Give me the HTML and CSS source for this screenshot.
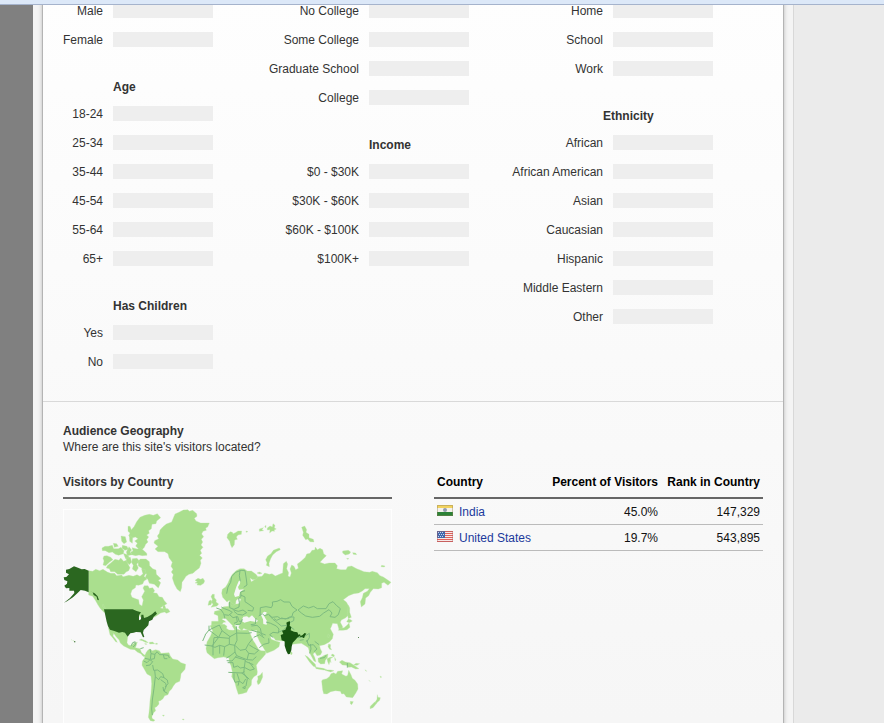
FILE: index.html
```
<!DOCTYPE html>
<html lang="en">
<head>
<meta charset="utf-8">
<title>Audience</title>
<link rel="stylesheet" href="styles.css">
</head>
<body>
<div class="topbar"></div>
<div class="shell">
<div class="gutter"></div>
<div class="sheet">
<main class="panel">
  <section class="demographics">
    <div class="column">
      <dl class="rows">
        <div><dt>Male</dt><dd></dd></div>
        <div><dt>Female</dt><dd></dd></div>
      </dl>
      <h3>Age</h3>
      <dl class="rows">
        <div><dt>18-24</dt><dd></dd></div>
        <div><dt>25-34</dt><dd></dd></div>
        <div><dt>35-44</dt><dd></dd></div>
        <div><dt>45-54</dt><dd></dd></div>
        <div><dt>55-64</dt><dd></dd></div>
        <div><dt>65+</dt><dd></dd></div>
      </dl>
      <h3>Has Children</h3>
      <dl class="rows">
        <div><dt>Yes</dt><dd></dd></div>
        <div><dt>No</dt><dd></dd></div>
      </dl>
    </div>
    <div class="column">
      <dl class="rows">
        <div><dt>No College</dt><dd></dd></div>
        <div><dt>Some College</dt><dd></dd></div>
        <div><dt>Graduate School</dt><dd></dd></div>
        <div><dt>College</dt><dd></dd></div>
      </dl>
      <h3>Income</h3>
      <dl class="rows">
        <div><dt>$0 - $30K</dt><dd></dd></div>
        <div><dt>$30K - $60K</dt><dd></dd></div>
        <div><dt>$60K - $100K</dt><dd></dd></div>
        <div><dt>$100K+</dt><dd></dd></div>
      </dl>
    </div>
    <div class="column">
      <dl class="rows">
        <div><dt>Home</dt><dd></dd></div>
        <div><dt>School</dt><dd></dd></div>
        <div><dt>Work</dt><dd></dd></div>
      </dl>
      <h3 class="wide">Ethnicity</h3>
      <dl class="rows">
        <div><dt>African</dt><dd></dd></div>
        <div><dt>African American</dt><dd></dd></div>
        <div><dt>Asian</dt><dd></dd></div>
        <div><dt>Caucasian</dt><dd></dd></div>
        <div><dt>Hispanic</dt><dd></dd></div>
        <div><dt>Middle Eastern</dt><dd></dd></div>
        <div><dt>Other</dt><dd></dd></div>
      </dl>
    </div>
  </section>

  <section class="geography">
    <h2>Audience Geography</h2>
    <p>Where are this site's visitors located?</p>
    <div class="split">
      <div>
        <h3 class="ruled">Visitors by Country</h3>
        <svg class="map" viewBox="9 27 987 690" role="img" aria-label="World map">
          <rect class="frame" x="10" y="28" width="985" height="700"/>
          <g class="land">
            <path d="M345 42l12-5 13-7 14-1 4 5 10-3 12 10 1 8-8 6 5 8 14 6 17 0 9 0-5 12-6 3 2 7-10 3-4 8 6 8-7 8 4 8-5 9 6 7-8 9 4 9-6 6 8 8-6 7 2 9-5 14-11 8-8 8-12 3-9 6-5 8-7 10-1 16-4 12-10-8-8-15-6-18 3-10-6-8 5-8-6-9 4-12-10-14-3-12-10-6-20 0-9-8 9-8-12-10 2-7 12-6-4-8 6-8 2-10 9-10 10-8 16-6z"/>
            <path d="M222 80l8-15 10-13 14-6 14-3 12 3 12-5 10 12-12 10-2 8-12 2-2 13-8 6 2 8-8 5 6 6-6 8 4 7-7 7-4 9-7 7-10-2-9-9 5-8-8-7 10-7-8-5-12 4-8-8 4-8-6-5 0-15 6 0 4 10z"/>
            <path d="M216 143l16 4 9-4 11 9 8 8 1 6-14 1-10-2-10 2-12-3-3-8 7-3zM208 106l10 7-1 17-8-6zM183 108l13 2 4 16-8 5-7-7zM145 139l12-3 4 10 14 0 8-4 9 10-2 9-14 5-10-3-9-7-10 2-11-6-9 0-1-8 9-5zM160 130l10 1 5 8-12 3zM187 136l14 3 4 9-10 3-9-6zM207 140l8 10-5 6 6 8-14 3-3-11zM190 160l14 5 4 9-11 2zM132 168l9-1 11 5 7 7-10 7-12 11-8-2 3-12-3-8zM153 188l12-10 12 3 5-7 9 10 8-3 7 15 4 7-4 9-8 4-6 7-19 0-9-8-12 0-4-9-9-2 3-7zM198 172l13 0 4 14-7 8-8-8zM217 176l14-1 8 9-9 8 5 12-7 11-11-8 3-11-5-8zM241 177l17 0 10 8 1 12 9 9 10 4 1 13 14 13-8 5 7 7-7 16-12-11-15-3-5-13-8-3 5-12-11-4-4-14-10-6-1-14zM221 229l12-2 10 13-7 10-8-4-9 2z"/>
            <path d="M86 212l12 2 9-6 12 4 10-4 13 8 10 4 12 0 6 7 15-2 4 5 18-4 13 3 11-5 9 5 9-8-4-13 10 0 3 12-6 9 9 8-9 6-4 9-12 4-8-1-2 8-10 7-4 12 4 10 11 4 9 3 2 14 8 5 4-18-5-10 9-16-5-10 4-7 11 0 4 8 10-2 6 9-4 6 11 2 6 10 10 2 6 10 8 9-13 8-7 5 11 2 12 0 6 9-10 5-7-4-11 3-13 9-14 7-22 6-14-12-14-12H132l-10-10-8-12-8-14-8-12-12-4zM308 316l6 0 4 10 7 5-2 3-13-3zM129 312l8 15-10-8z"/>
            <path d="M145 383l13 5 14 4 18 1 10 8 3 10-2 17 4 7 8 2 9-7 10-4-3 10-3 7 14 3 4 11 9 8 8-3 4 5-5 4-11-2-6-8-10-4-9-8-13-1-20-10-10-9-4-10-8-8-8-11-2 8 8 10 5 9-5-2-9-12-8-9zM238 420l6-3 13 5 8 6-9-1-9-5zM268 427l10-1 6 5-15 1zM254 431l5 0 2 2-6 0zM287 430h5v3h-5z"/>
            <path d="M258 458l6-8 6-3 7 5 10-3 11 3 5 8 10-1 14-1 4 10 7 9 15 3 10 8 14 5-2 15-12 13-1 10-3 13-12 5-7 9-5 9-7 7-4 10-10 3-5 9-8 6-5 1 1 9-7 8-6 3 3 9-6 6-5 11 0 6 9 6-5 3-9-2-6-10 2-14 2-20 1-17 3-20 2-30-2-22-12-7-8-14-7-12 1-12 6-9z"/>
            <path d="M405 241l9-6 8 3 7-3 5 8-3 7-9 6-11-1 2-5-8-1 7-4zM307 646l6-1-2 4zM366 658l6-1v3zM34 419l3 2zM39 421l3 2z"/>
          </g>
          <g class="usa">
            <path d="M86 212l-12-5-9 1-11-5-12-4-14 8-10 2 0 9 9 5-8 8-8 1 2 8 9 4-1 7-8 6 5 8 10-1 0 8 14 0 1 7-13 15-18 14 9-4 18-12 13-12 10-10 13 2 11 5z"/>
            <path d="M132 328H218l12 5 13 4-6 9 0 15 6-3 1-14 6 0 2 10 10-3 14-8 10-9 5 7-10 9-4 9-10 5-2 12-8 8-6 6-2 8 4 13-4 1-7-15-14-1-7 2-10 2-8 10-8-12-8-2-10 2-14-5-13-4-6-10-4-14z"/>
            <path d="M89 273l9 4 3 8 9 5 2 9 5 2-4-12-9-9zM42 424h4v3h-4z"/>
          </g>
          <g transform="translate(390 0)">
            <g class="land">
              <path d="M98 292l-3-12 2-12 10-7 7-12 5-12 8-14 11-11 12-6 12 0 10 7 12 0 14 10 6 8-6 7-10 1-8-5 4 11 12-7 8-8 12-1 8-10 14 4 8-2 10 7 14-6 8-3 2-28 9-7 4 8-3 14 6 12-2 10 6 3 4-12-4-12 5-12 7 4 5 10 8-4-3-13 11-8 13-12 4-10 10-2 6-9 8-1 2-9 6 8 8-4 8 4 3 12 8 6-10 10-9 10 14 5 13-3 18 0 7 8-2 9 12 3 16 0 5-9 12-2 15 8 10 4 12 5 17 2 8-3 15 4 8 9 10 4 10 7 13 9-9 9-12-9-7 3 0 13-10 4-15-1-9 11-5 10-9 7-2 18-11 9-3-16 6-12 3-13 12-6 6-8-13 0-8 7-11 6-15 2-15 6-16 12 9 7 8 14 0 24-11 10-12 6-3 7 7 13-2 9-9-1-5-17-14-1-4 10-3 6 9 17-3 13-9 10-15 8-14 3 2 9 5 10-5 9-10 2-6-10-6 5 5 10 4 13-6-2-8-15-5-9-4-16-9-6-12-7-40 4-13-11-24-2-8-11-8 0 3 8 13 5 13 4-3 13-15 11-22 9-8-14-13-21-9-20 1-14-20 2-14-5-6-3-6 9-8-10-6-10-4-1 4 17-7-1-8-12-13-11-12 1-10 12-13 10-9-2-5-7 1-16 20 0-1-17-12-5 2-8 15-3 12-11 15-1 0-10 4-8 5 8 8 4 14-2 6-13-8-3-7 7-1 10-10 6-5-3-4-14-7 5z"/>
              <path d="M67 283l6 0 0 10 6 7-1 6 8 6-5 6-18 4 6-9-4-6 2-9-4-8zM57 303l6-3 3 6-3 8-9 2zM113 103l8-8 6 2 2 4 7-3 8-5 11 0-1 10-10 2-5 6 3 7-8 2-1 14-7 9-4-8-3-11-8-11zM208 87l12-4-4 6 5 3-13 2zM224 80l4-4 0 7zM232 84l8-6 7 3 2-10 6 5-2 8 6 3-7 3 2 4-8-1-7 6 1-10-8 1zM268 144l3 5-12 6-11 10-6 11-5 14 1 10-9-4 2-8-4-9 6-11 10-7 7-10zM335 82l9-4 6 11-2 8 9 6 0 10 13 5 2 8-12-1-7-8-6 2-9-13 2-9zM458 153l17-2 7 5-4 6-12 3-8-6zM488 158l9 1 3 5-10-1zM575 196l10 2-2 3-10-1zM470 175l7 1-5 2zM168 93l6 2-6 2zM201 219l7-3 8 4-8 2zM475 316l4 8 0 13 5 15-9 4-3-15z"/>
              <path d="M60 377l12-3 18-1 13 0 8 6-2 6 8 5 13 1 8-5 14 5 23-1 7 14 6 15 8 12 9 16 8 5 14 1 0 9-10 12-12 13-6 9 3 19-1 9-10 7-6 9-1 15-9 11-5 11-14 4-11 2-6-18-5-20-9-15 2-15-4-18-5-11-1-12-16-3-17 2-11 3-14-11-8-7-3-12 3-20 11-19 6-15z"/>
              <path d="M217 517l1 14-8 19-6 4-3-9 3-8-1-8 8-4zM301 452l6 7-3 6-3-4zM475 357l7 2 5 4-9 5-8-3zM477 369l3 13-9 7-12 2-14 0 3-5 14-3 9-7zM415 402l4 3-3 9-4-4zM416 432l6 2-1 9 4 6-6-1-5-8zM427 462l6 3-1 6-9-5zM384 475l10-4 9-5 11-4-2 11-6 8-2 10-12 1-7-6zM345 466l8 4 12 12 11 11 2 9-8-3-12-14zM376 501l12 2 12 2 10 4-9 1-23-4zM411 476l9-4 9-1-8 5 2 12-3-5-3 11-4-9zM434 472l4 8-3 2zM448 486l8-5 10 5 14 2 12 8 15 10-10 1-13-6-9 1-5-6-13-1zM498 490l11 1-8 5-10-1zM407 509l16 1 9 2-10 4-17-5zM526 509l4 5-3-1zM570 528l5 3-3 2zM536 541l5 3z"/>
              <path d="M395 543l3-4 12-3 8-6 5-9 8-3 7 4 5-8 15-2-3 10 13 7 5-3 3-15 7 13 4 11 8 6 8 11 1 15-7 13-9 13-10-1-9-1-7-10-7 1-4-8-15-2-14 3-11 7-10-1-3-11zM481 604l9 1-5 9-4-3zM562 584l2 8 7 1-2 8-10 9-4-3 6-9zM554 606l6 4-11 13-9 3 1-7z"/>
            </g>
            <g class="sea">
              <path d="M154 362l6-12 11-1 6 4 9-7 8 9 10 7-4 4-19-3-18 5zM212 343l11-8 7 2-2 7-7 1 5 10 5 8-1 11-10-2-1-14zM95 357l11-2 11 11 11 11-3 3-13-8-7-9zM133 377l6-2 10 1-5 7z"/>
              <path d="M139 260l7-16 5-4-1 11-6 10 3 8 15-1-12 9-3 11-12 3-3-8z"/>
            </g>
            <g class="borders">
              <path d="M110 281l4-20 8-14 3-17 12-13 16-6 12 1 4 25 2 18-10 7M150 211l-2 16 3 17M152 285l13 6 0 14 12 8 14 10-3 10-15-2M165 272l-13 4 1 14-7 5 2 13-1 13-15 7-13-5 0-17M79 324l14 5 8 12 4 15M94 321l9 5 14 5 10 6-11 9-13-2M128 329l17 5 14-4 11 8-12 7-15-2-11-9M119 344l10 9 14-3 5 15 9-3M139 349l3 17-10 4M157 357l-6 15-14 2M198 354l-2 18-14 2M210 347l1-24 17-3 16 3 4-8-1-9 14-2 11-5 10 7 17 0 7 13 15 11-12 8-3 11-12 7-22 0-9-6-17 2-10-9-13 4-6-6-11 7M324 330l16-12 16 6 15-5 11 7 26 0 9-15 12-6 10 11 12 10-6 18-10 8-15-2 6-11-9-10-16 10-12 10-22 3-20-4-13-9-10-9M237 345l12 13 13 10 12 10 17-2 8-8 12-6 1-11-13 0-12 6-12-3-15 7-8-5M228 366l14 4 17 8 8 9-2 12-16-2-10 7 11 9M265 397l15-7 10-9 12 0 11 8M184 378l17-2 10 9 3 15 13 5M184 390l14 5 12 2 8 10M191 412l18-8 14 10M208 443l13-10 16-4-1-14M310 406l14 7 17-2 17-11 0 13-8 13M341 419l-12 2M350 420l6 16 14-2 11 13-9 8M361 432l2 15-4 13M374 424l13 10M390 475l13-2 5-7M472 489l0 14"/>
              <path d="M57 377l0 13-12 15M46 405l-8 18M57 390l29 22-20 26-22-3M57 390l31-15M86 412l-14 1-3 27 0 26M88 375l8 17 24 18 20-11-1-20M96 392l-10 20 32 3 2-5M118 415l0 18-14 7-15-4-14 6-10-3M89 436l0 25M104 440l-3 27M140 399l32 1 13-2M140 399l1 22-7 15 1 20-15 12-11 6M118 433l17 3 15 15 17-3 9-17 12-15M167 448l9 12 17 2 13-11-15-8-13-8M176 460l-5 19 17 1 11-10M171 479l-31-12-5-11M140 467l-14 16-16-1M135 471l31 9-3 22-12 2-8-6-12 4-2-14-16 0M163 502l17 9 13-4-15-20M166 484l24 10M163 502l-2 17 11 17-4 22M115 517l41 2 8-4M132 520l0 17 3 10 14-3 10 7 8-14M141 520l7 21-4 16M155 519l14 10 9 9M158 563l8-4-1 7z"/>
            </g>
            <path class="india" d="M272 405l8-3-4-10 10-3 5-12-2-9 5-3 6-1 0 7-1 7 5 3-2 10 10 4 10 2 3 7 5-1 2 4-9 5-7 8-8 8-3 12-1 11-5 11-5 1-5-10-5-16 0-13-9-3z"/>
            <path class="india" d="M330 409l7-3 7-7 5 2-5 7-1 5-4 1-2-4-6 2z"/>
            <path class="usa" d="M504 412h3v2h-3z"/>
          </g>
          <g class="borders">
            <path d="M270 447l3 14 12 2 6-8 8 9 11 0 15 2 3 8M310 464l3 12 9 0M273 461l-2 17-10 10-10-5M285 463l-2 13-10 2M255 475l13 3 10 7-8 10-12 2M278 495l3 16 12-1 15 11 4 12 10 7 2 11-9 10M284 510l2 20-4 35-5 35-2 27 2 18M286 530l10 9 6-9 10 3M302 539l15 11 2 8-7 16 10 6M309 561l2 12M213 438l5-10 8-3M219 441l8-7M241 446l10-3M225 426l1 8"/>
          </g>
        </svg>
      </div>
      <table>
        <thead><tr><th scope="col">Country</th><th scope="col">Percent of Visitors</th><th scope="col">Rank in Country</th></tr></thead>
        <tbody>
          <tr>
            <td><svg class="flag" viewBox="0 0 16 11" aria-hidden="true"><path fill="#f4f2ed" d="M0 0h16v11H0z"/><path fill="#f2d35f" d="M0 0h16v3H0z"/><path fill="#2c8237" d="M0 7h16v4H0z"/><circle cx="8" cy="5" r="2" fill="#929cae"/><path fill="none" stroke="#8b7d55" stroke-opacity=".4" d="M.5.5h15v10H.5z"/></svg><a href="#india">India</a></td>
            <td>45.0%</td><td>147,329</td>
          </tr>
          <tr>
            <td><svg class="flag" viewBox="0 0 16 11" aria-hidden="true"><path fill="#f7e9e8" d="M0 0h16v11H0z"/><path stroke="#df615c" d="M0 .5h16M0 2.5h16M0 4.5h16M0 6.5h16M0 8.5h16M0 10.5h16"/><path fill="#4268ac" d="M0 0h8v7H0z"/><path stroke="#c6d5ee" stroke-dasharray="1 1" d="M1 1.5h6M2 3.5h5M1 5.5h6"/><path fill="none" stroke="#a55f63" stroke-opacity=".4" d="M.5.5h15v10H.5z"/></svg><a href="#united-states">United States</a></td>
            <td>19.7%</td><td>543,895</td>
          </tr>
        </tbody>
      </table>
    </div>
  </section>
</main>
</div>
</div>
</body>
</html>
```
FILE: styles.css
```
* { box-sizing: border-box; }
body {
  margin: 0;
  height: 100vh;
  overflow: hidden;
  background: #ebebeb;
  color: #333;
  font: 12px/16px "Liberation Sans", Arial, sans-serif;
}
h2, h3, p, dl, dt, dd { margin: 0; font-size: 12px; }
.topbar {
  position: fixed;
  inset: 0 0 auto;
  height: 5px;
  background: #dce8f8;
  border-bottom: 1px solid #a5b3cc;
}
.shell {
  display: grid;
  grid-template-columns: 33px minmax(0, 761px) 1fr;
  height: 100%;
}
.gutter { background: #808080; }
.sheet {
  padding: 0 9px;
  background: #f4f4f4;
  border-right: 1px solid #d8d8d8;
  overflow: hidden;
}
.panel {
  min-height: 100%;
  border: solid #b4b4b4;
  border-width: 0 1px;
  background: linear-gradient(#fefefe, #f6f6f6 723px);
  box-shadow: 0 0 4px #bbb;
}
.demographics {
  display: grid;
  grid-template-columns: 150px 256px 244px;
  margin-top: -4px;
  padding: 0 20px 25px;
  border-bottom: 1px solid #d9d9d9;
}
.rows div {
  display: grid;
  grid-template-columns: 1fr 100px;
  column-gap: 10px;
  align-items: center;
  height: 29px;
}
.rows dt { justify-self: end; white-space: nowrap; }
.rows dd { height: 15px; background: #eee; }
.column:first-child .rows div { grid-template-columns: 40px 100px; }
.column:first-child dt { justify-self: start; min-width: 40px; text-align: right; }
.column h3 {
  width: 100px;
  margin-left: auto;
  padding: 25px 0 4px;
}
.column h3.wide { width: 110px; }
.geography { padding: 21px 20px 0; }
.split {
  display: grid;
  grid-template-columns: 1fr 1fr;
  gap: 42px;
  align-items: start;
  margin-top: 19px;
}
.ruled { padding-bottom: 7px; border-bottom: 2px solid #666; }
.map { display: block; width: 100%; margin-top: 10px; }
.frame { fill: #f8f8f8; stroke: #fff; stroke-width: 3; }
.land { fill: #aadf8e; stroke: #bde6a7; stroke-width: 1; }
.usa { fill: #2b6720; }
.india { fill: #175410; }
.sea { fill: #f7f7f7; }
.borders { fill: none; stroke: #7dbb80; stroke-width: 3; stroke-linejoin: round; }
table { width: 100%; border-collapse: collapse; color: #111; }
th, td { padding: 0 3px; text-align: right; white-space: nowrap; }
th:first-child, td:first-child { text-align: left; }
th { padding-bottom: 7px; color: #000; }
th:nth-child(3), td:nth-child(3) { width: 102px; }
thead { border-bottom: 2px solid #666; }
td { height: 26px; padding-top: 2px; border-bottom: 1px solid #bbb; }
.flag { width: 16px; height: 11px; margin-right: 6px; }
a { color: #1b3a9c; text-decoration: none; }
```
